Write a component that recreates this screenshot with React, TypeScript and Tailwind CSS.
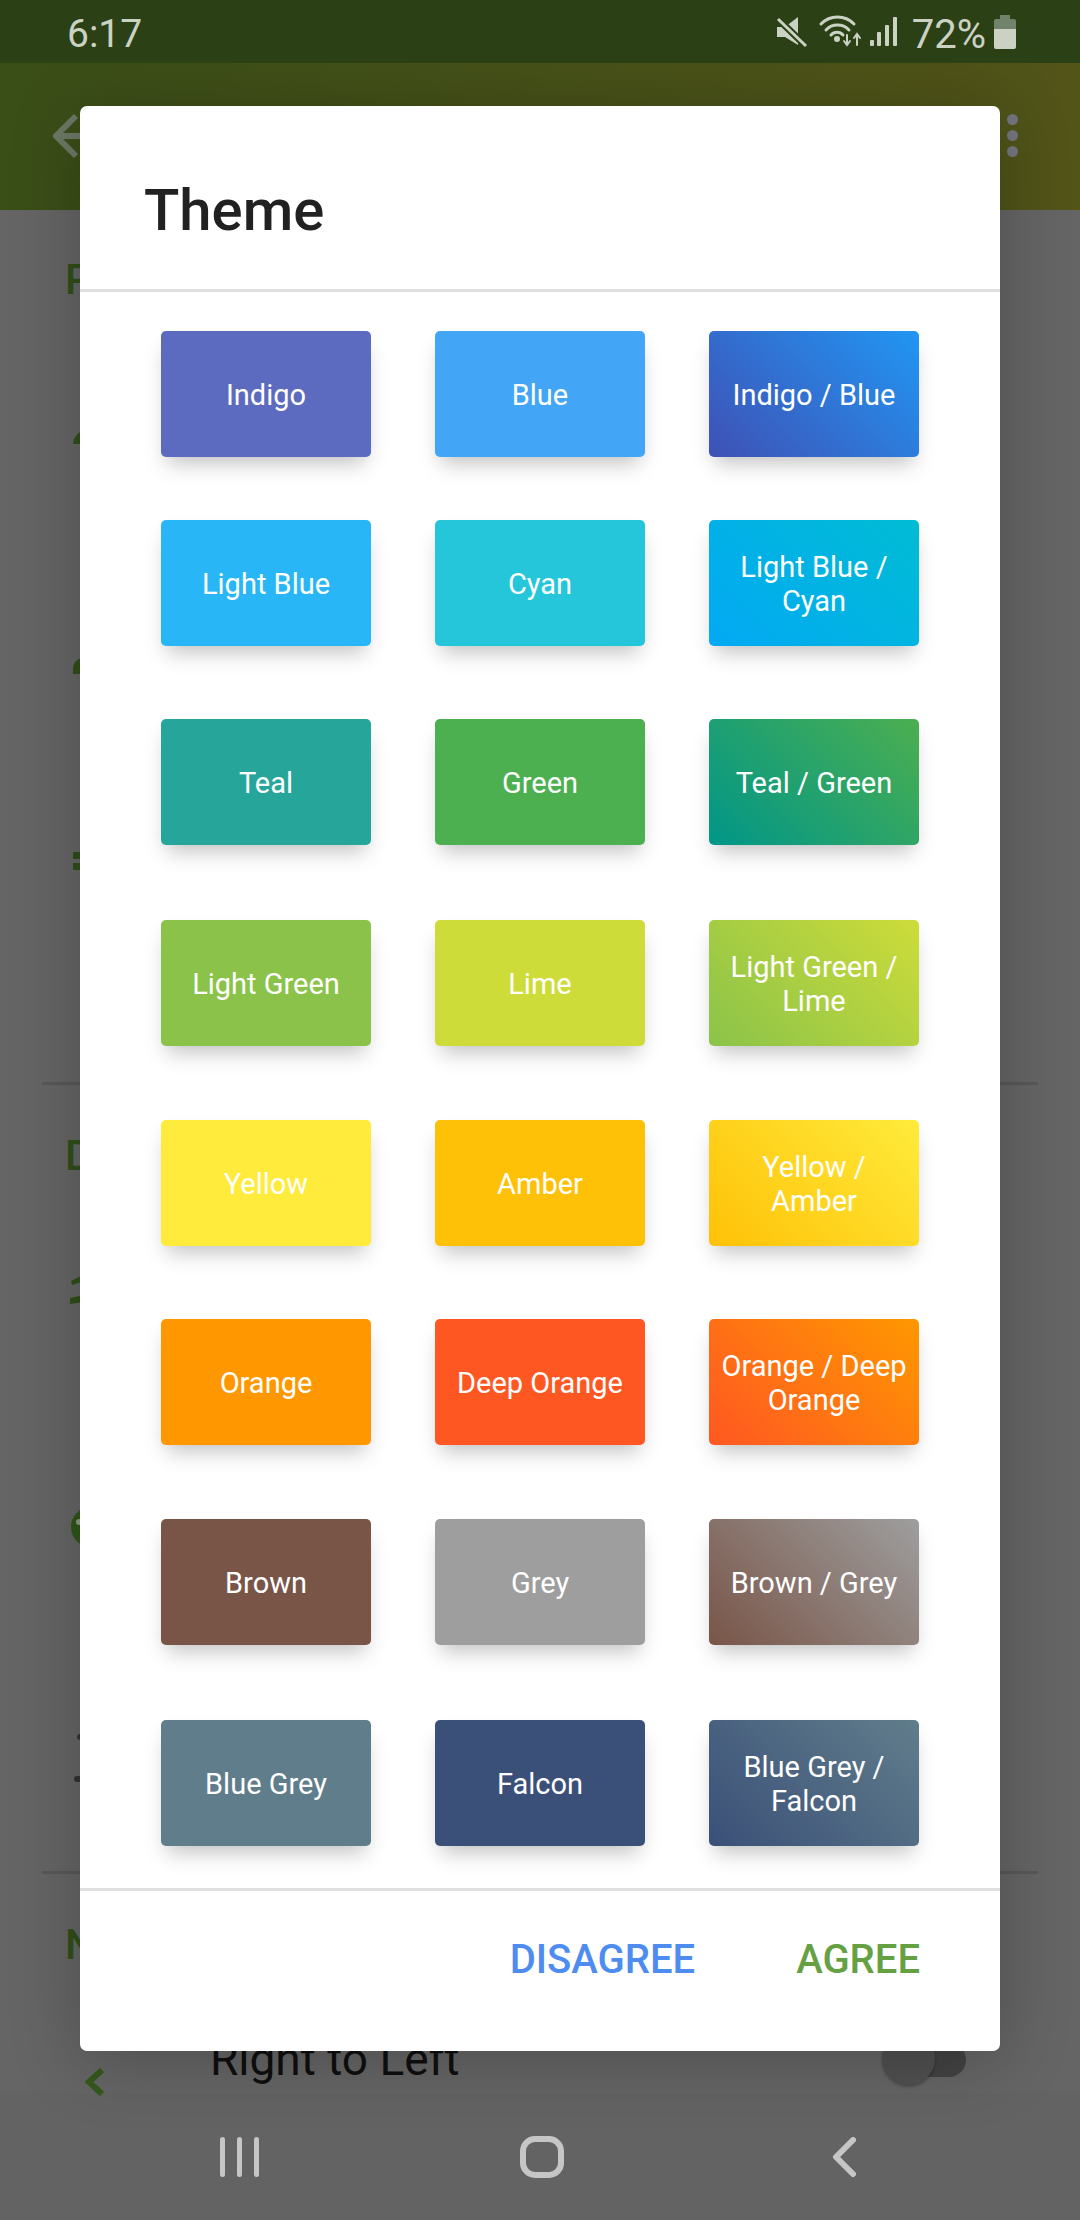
import React from 'react';

type Tile = { label: string; className: string };

const tiles: Tile[] = [
	{ label: 'Indigo', className: 'bg-[#5c6bc0]' },
	{ label: 'Blue', className: 'bg-[#42a5f5]' },
	{ label: 'Indigo / Blue', className: 'bg-[linear-gradient(45deg,#3f51b5,#2196f3)]' },
	{ label: 'Light Blue', className: 'bg-[#29b6f6]' },
	{ label: 'Cyan', className: 'bg-[#26c6da]' },
	{ label: 'Light Blue / Cyan', className: 'bg-[linear-gradient(45deg,#03a9f4,#00bcd4)]' },
	{ label: 'Teal', className: 'bg-[#26a69a]' },
	{ label: 'Green', className: 'bg-[#4caf50]' },
	{ label: 'Teal / Green', className: 'bg-[linear-gradient(45deg,#009688,#4caf50)]' },
	{ label: 'Light Green', className: 'bg-[#8bc34a]' },
	{ label: 'Lime', className: 'bg-[#cddc39]' },
	{ label: 'Light Green / Lime', className: 'bg-[linear-gradient(45deg,#8bc34a,#cddc39)]' },
	{ label: 'Yellow', className: 'bg-[#ffeb3b]' },
	{ label: 'Amber', className: 'bg-[#ffc107]' },
	{ label: 'Yellow / Amber', className: 'bg-[linear-gradient(45deg,#ffc107,#ffeb3b)]' },
	{ label: 'Orange', className: 'bg-[#ff9800]' },
	{ label: 'Deep Orange', className: 'bg-[#ff5722]' },
	{ label: 'Orange / Deep Orange', className: 'bg-[linear-gradient(45deg,#ff5722,#ff9800)]' },
	{ label: 'Brown', className: 'bg-[#795548]' },
	{ label: 'Grey', className: 'bg-[#9e9e9e]' },
	{ label: 'Brown / Grey', className: 'bg-[linear-gradient(45deg,#795548,#9e9e9e)]' },
	{ label: 'Blue Grey', className: 'bg-[#607d8b]' },
	{ label: 'Falcon', className: 'bg-[#3b5078]' },
	{ label: 'Blue Grey / Falcon', className: 'bg-[linear-gradient(45deg,#3b5078,#607d8b)]' },
];

function StatusBar() {
	return (
		<div className="relative z-20 flex h-[63px] shrink-0 items-center bg-[#2c4016] pl-[67px] pr-[64px] text-[#cbd2c4]">
			<span className="pt-[6px] text-[39px] leading-none">6:17</span>
			<svg className="ml-auto h-[40px] w-[124px]" viewBox="776 12 124 40" fill="#cbd2c4">
				{/* mute */}
				<path d="M778 27h8l13-10v28l-13-8h-8z" />
				<path d="M779 19l28 27" stroke="#2c4016" strokeWidth="7" />
				<path d="M779 19l28 27" stroke="#cbd2c4" strokeWidth="3" />
				{/* wifi */}
				<g fill="none" stroke="#cbd2c4" strokeWidth="3" strokeLinecap="round">
					<path d="M822 24a23 23 0 0 1 33 0" />
					<path d="M827 30a16 16 0 0 1 23 0" />
					<path d="M832 35a8 8 0 0 1 12 0" />
					<path d="M848 35v10M845 41l3 4 3-4M858 45V34M855 38l3-4 3 4" strokeWidth="2" />
				</g>
				<circle cx="838" cy="39" r="3" />
				{/* signal */}
				<rect x="871" y="40" width="4" height="6" rx="1" />
				<rect x="878" y="32" width="4" height="14" rx="1" />
				<rect x="886" y="25" width="4" height="21" rx="1" />
				<rect x="894" y="17" width="4" height="29" rx="1" />
			</svg>
			<span className="ml-[13px] pt-[6px] text-[40px] leading-none">72%</span>
			<svg className="ml-[8px] h-[34px] w-[22px]" viewBox="0 0 22 34">
				<path d="M6 0h10v4h4a2 2 0 0 1 2 2v8H0V6a2 2 0 0 1 2-2h4z" fill="#71836a" />
				<path d="M0 14h22v18a2 2 0 0 1-2 2H2a2 2 0 0 1-2-2z" fill="#cbd2c4" />
			</svg>
		</div>
	);
}

function AppHeader() {
	return (
		<div className="flex h-[147px] shrink-0 items-center justify-between bg-gradient-to-r from-[#3a4e18] to-[#525418] pb-[2px] pl-[53px] pr-[62px]">
			<svg className="h-[44px] w-[44px]" viewBox="0 0 44 44" fill="none" stroke="#6d7866" strokeWidth="6">
				<path d="M23 2L3 22l20 20M3 22h41" />
			</svg>
			<div className="flex flex-col gap-[5px]">
				<span className="h-[11px] w-[11px] rounded-full bg-[#767682]" />
				<span className="h-[11px] w-[11px] rounded-full bg-[#767682]" />
				<span className="h-[11px] w-[11px] rounded-full bg-[#767682]" />
			</div>
		</div>
	);
}

function SectionLetter({ letter, className }: { letter: string; className: string }) {
	return (
		<div className={`h-[50px] pl-[65px] text-[42px] font-medium leading-[50px] text-[#2f4f18] ${className}`}>
			{letter}
		</div>
	);
}

function Divider({ className }: { className: string }) {
	return <div className={`mx-[42px] h-[3px] bg-[#585858] ${className}`} />;
}

function SettingsBehind() {
	return (
		<div className="flex h-[1883px] shrink-0 flex-col bg-[#656565]">
			<SectionLetter letter="P" className="mt-[45px]" />
			<div className="flex h-[270px] items-center pl-[73px]">
				<svg className="h-[30px] w-[30px]" viewBox="0 0 30 30" fill="#2f4f18">
					<path d="M0 19a15 15 0 0 1 15-14h15v14z" />
				</svg>
			</div>
			<div className="flex h-[182px] items-center pl-[73px]">
				<svg className="h-[30px] w-[30px]" viewBox="0 0 30 30" fill="#2f4f18">
					<path d="M0 23V17A10 10 0 0 1 10 7h20v16z" />
				</svg>
			</div>
			<div className="flex h-[208px] items-center pl-[73px]">
				<svg className="h-[18px] w-[30px]" viewBox="0 0 30 18" fill="#2f4f18">
					<rect y="0" width="30" height="7" />
					<rect y="11" width="30" height="7" />
				</svg>
			</div>
			<Divider className="mt-[117px]" />
			<SectionLetter letter="D" className="mt-[46px]" />
			<div className="flex h-[214px] items-center pl-[70px]">
				<svg className="h-[32px] w-[30px]" viewBox="0 0 30 32" fill="#2f4f18">
					<path d="M1 9l12-6 17-3v6L14 9l-12 4z" />
					<path d="M0 26l14-3 16-5v6l-16 6-14 2z" />
				</svg>
			</div>
			<div className="flex h-[264px] items-center pl-[71px]">
				<svg className="h-[40px] w-[40px]" viewBox="0 0 40 40">
					<circle cx="20" cy="20" r="20" fill="#2f5518" />
					<circle cx="8" cy="15" r="3" fill="#8f9a86" />
				</svg>
			</div>
			<div className="flex h-[198px] flex-col justify-center gap-[36px] pl-[74px]">
				<span className="ml-[3px] h-[6px] w-[20px] rounded-full bg-[#333]" />
				<span className="h-[6px] w-[20px] rounded-full bg-[#333]" />
			</div>
			<Divider className="mt-[14px]" />
			<SectionLetter letter="N" className="mt-[46px]" />
			<div className="mt-[60px] flex h-[60px] pl-[85px]">
				<svg className="relative z-[1] mt-[38px] h-[28px] w-[20px] shrink-0" viewBox="0 0 20 28" fill="none" stroke="#35591c" strokeWidth="6">
					<path d="M17 2L4 14l13 12" />
				</svg>
				<span className="ml-[105px] pt-[4px] text-[46px] leading-[50px] text-[#0f0f0f]">Right to Left</span>
				<div className="relative ml-auto mr-[114px] mt-[2px] h-[53px] w-[84px] shrink-0">
					<span className="absolute right-0 top-[11px] h-[34px] w-[72px] rounded-full bg-[#434343]" />
					<span className="absolute left-0 top-0 h-[53px] w-[53px] rounded-full bg-[#505050] shadow-[0_2px_3px_rgba(0,0,0,0.25)]" />
				</div>
			</div>
		</div>
	);
}

function NavBar() {
	return (
		<div className="flex h-[127px] shrink-0 items-center bg-[#636363] pl-[220px]">
			<svg className="h-[40px] w-[40px]" viewBox="0 0 40 40" fill="#c6c6c6">
				<rect x="0" y="0" width="5" height="40" rx="2.5" />
				<rect x="17" y="0" width="5" height="40" rx="2.5" />
				<rect x="34" y="0" width="5" height="40" rx="2.5" />
			</svg>
			<span className="ml-[260px] h-[42px] w-[44px] rounded-[15px] border-[6px] border-[#c6c6c6]" />
			<svg className="ml-[268px] h-[40px] w-[24px]" viewBox="0 0 24 40" fill="none" stroke="#c6c6c6" strokeWidth="6" strokeLinecap="round" strokeLinejoin="round">
				<path d="M21 3L4 20l17 17" />
			</svg>
		</div>
	);
}

function ThemeModal() {
	return (
		<div className="absolute left-[80px] top-[106px] z-10 w-[920px] rounded-[7px] bg-white shadow-[0_8px_70px_rgba(0,0,0,0.24)]">
			<div className="flex h-[183px] items-center pl-[64px] pt-[26px] text-[58px] font-medium text-[#212121]">
				Theme
			</div>
			<div className="h-[3px] bg-[#e0e0e0]" />
			<div className="mx-[81px] grid grid-cols-[repeat(3,210px)] grid-rows-[189px_199px_201px_200px_199px_200px_201px_126px] justify-between pb-[42px] pt-[39px]">
				{tiles.map((tile) => (
					<div
						key={tile.label}
						className={`flex h-[126px] items-center justify-center rounded-[5px] px-[10px] pt-[1px] text-center text-[29px] leading-[34px] text-white shadow-[0_12px_20px_-6px_rgba(0,0,0,0.25)] ${tile.className}`}
					>
						{tile.label}
					</div>
				))}
			</div>
			<div className="h-[3px] bg-[#e0e0e0]" />
			<div className="flex h-[160px] justify-end gap-[101px] pr-[80px] pt-[44px] text-[40px] font-medium leading-[50px]">
				<span className="text-[#4e8cf0]">DISAGREE</span>
				<span className="text-[#65a143]">AGREE</span>
			</div>
		</div>
	);
}

export default function App() {
	return (
		<div className="relative flex h-[2220px] w-[1080px] flex-col overflow-hidden font-['Roboto',sans-serif]">
			<StatusBar />
			<AppHeader />
			<SettingsBehind />
			<NavBar />
			<ThemeModal />
		</div>
	);
}
